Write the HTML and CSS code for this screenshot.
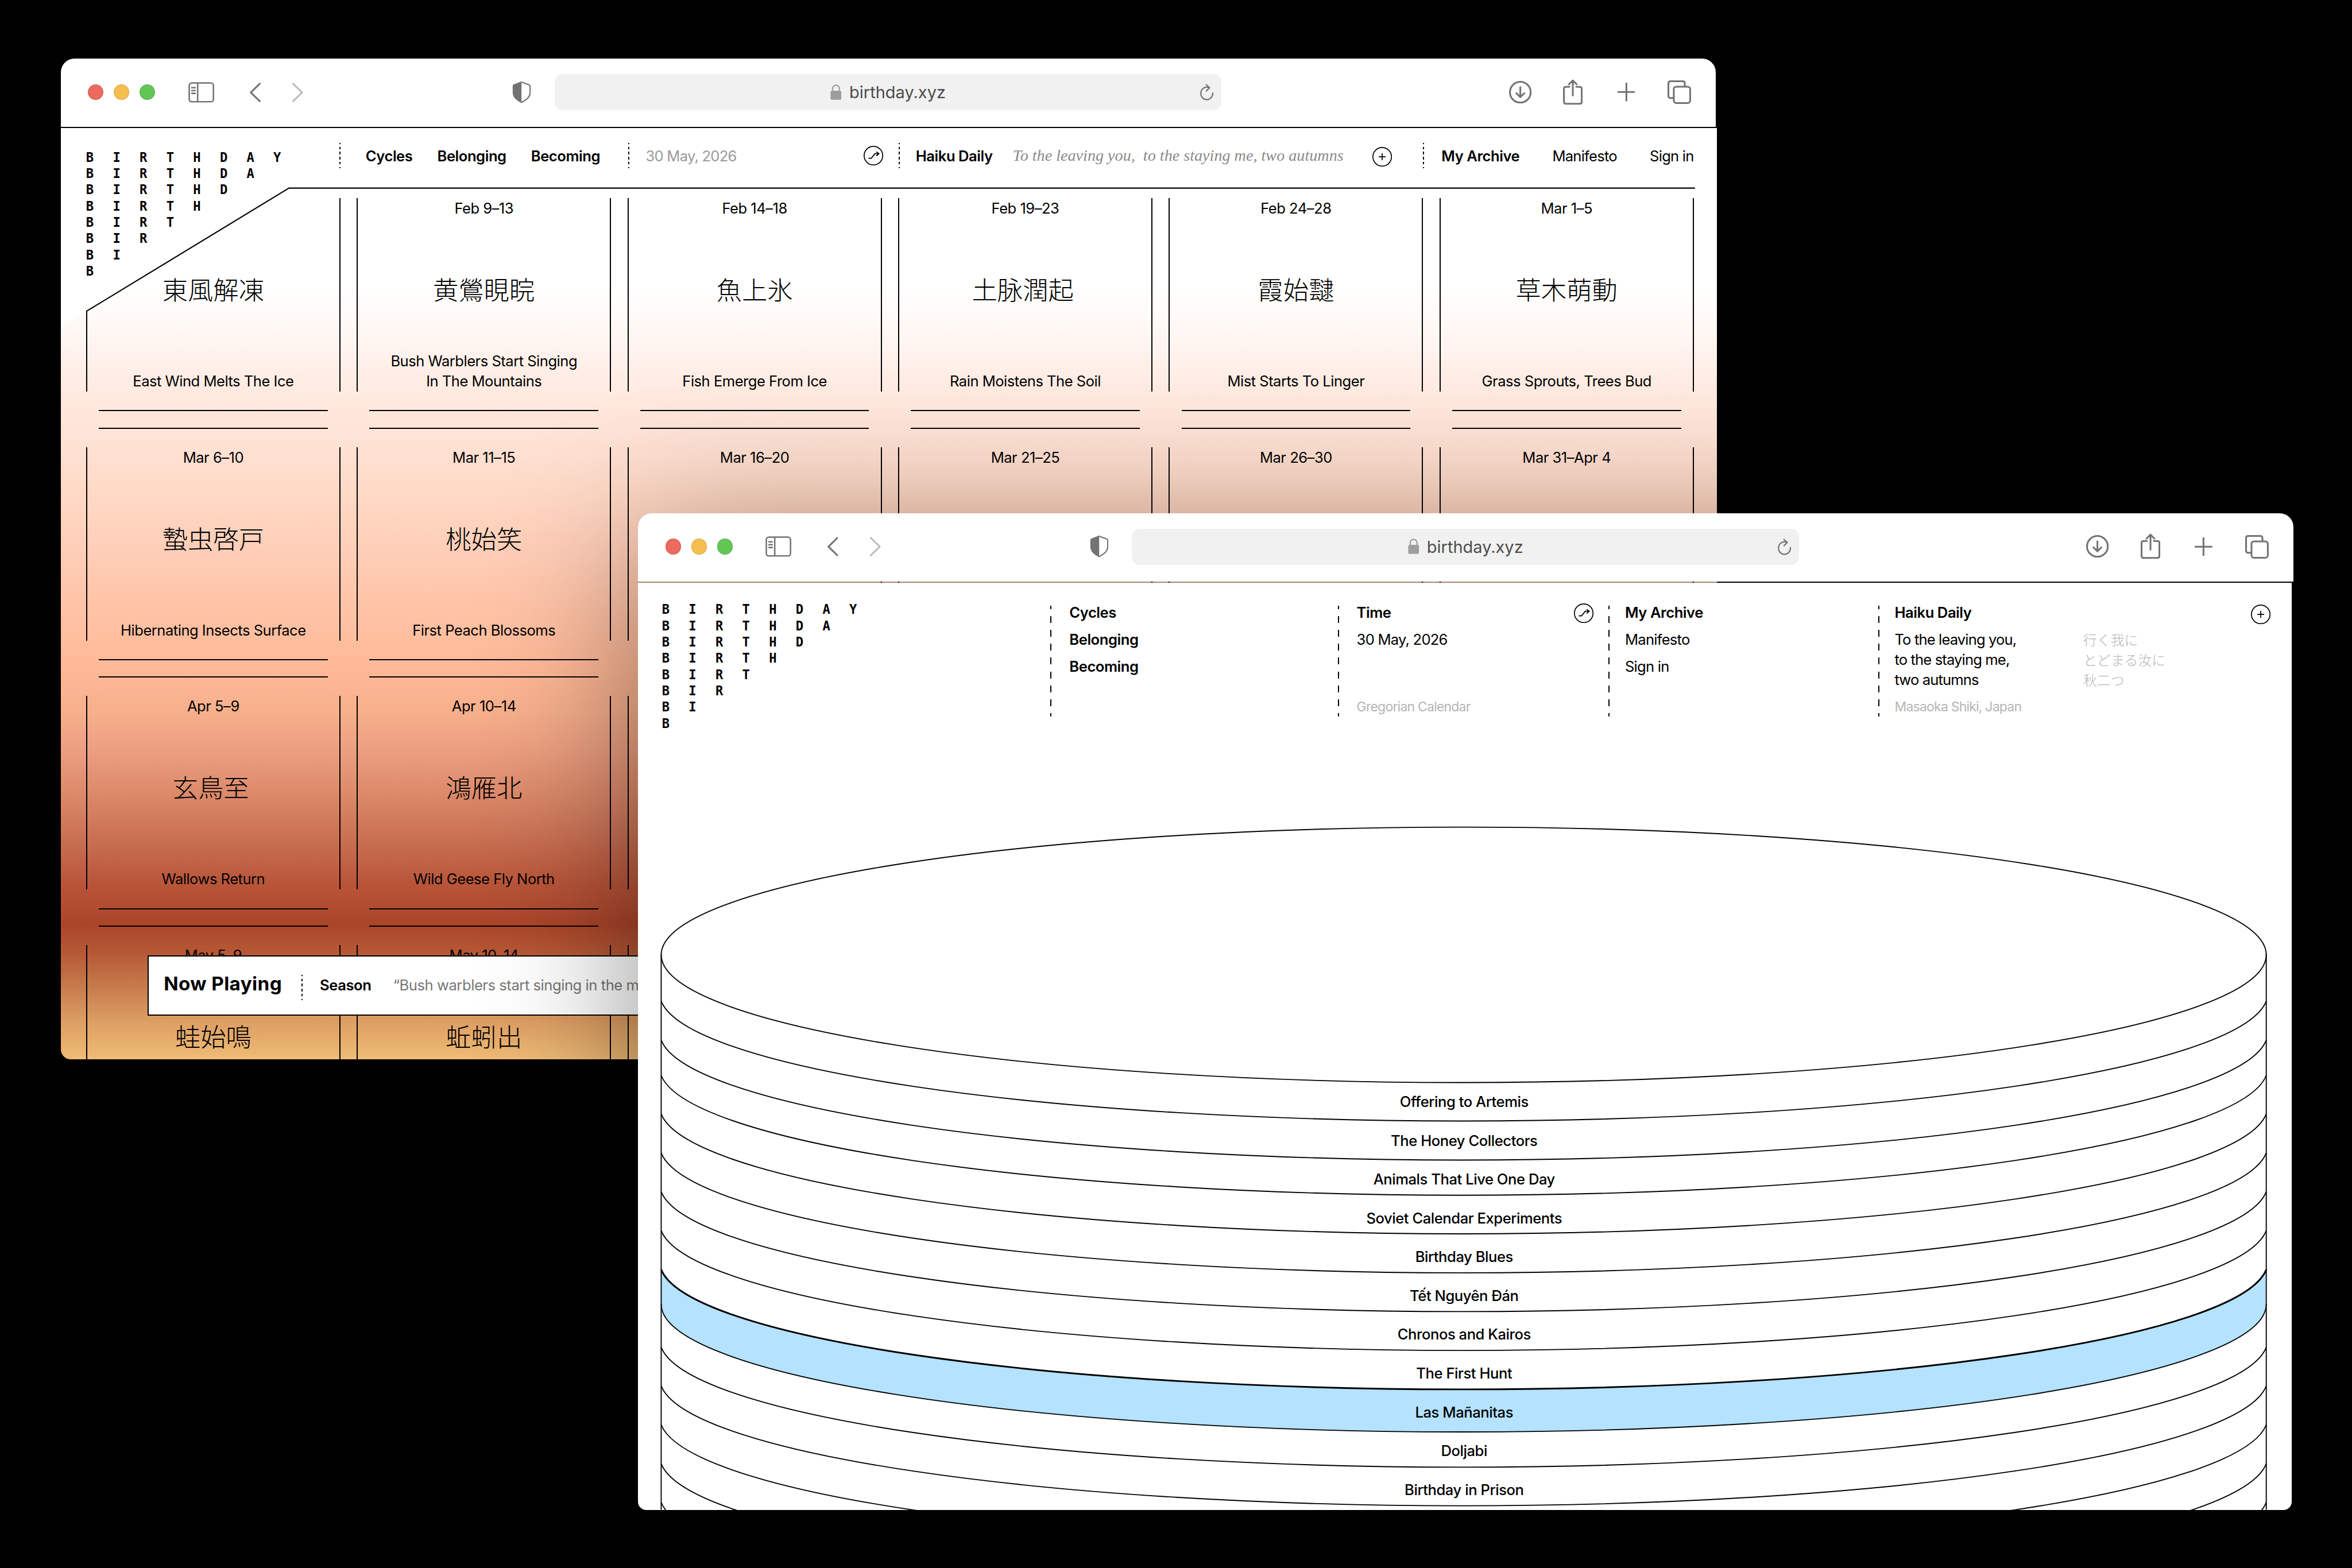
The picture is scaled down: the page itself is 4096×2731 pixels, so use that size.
FILE: index.html
```
<!DOCTYPE html>
<html lang="en">
<head>
    <meta charset="UTF-8">
    <title>Birthday</title>
    <link rel="stylesheet" href="styles.css">
</head>
<body>
<!-- shared icons -->
<svg class="sprite">
    <symbol id="i-sidebar" viewBox="0 0 53 42">
        <rect x="1.8" y="1.8" width="49.4" height="38.4" rx="5"/>
        <path d="M19 2v38M7 11.5h7M7 17.3h7M7 23h7"/>
    </symbol>
    <symbol id="i-back" viewBox="0 0 22 40"><path d="M20.5 2L2 20l18.500 18"/></symbol>
    <symbol id="i-forward" viewBox="0 0 22 40"><path d="M1.500 2L20 20L1.500 38"/></symbol>
    <symbol id="i-shield" viewBox="0 0 38 46">
        <path class="solid" d="M19 1L3 7Q1 8 1 10V24C1 34 9 40 19 45z"/>
        <path d="M19 2.300L34.500 8Q36.500 9 36.500 11V24C36.500 33 29 39 19 43.700"/>
    </symbol>
    <symbol id="i-lock" viewBox="0 0 23 32">
        <rect class="solid" x="0.500" y="13" width="22" height="18.500" rx="3"/>
        <path d="M4.500 14V9a7 7.500 0 0 1 14 0v5"/>
    </symbol>
    <symbol id="i-reload" viewBox="0 0 28 34">
        <path d="M25.800 18.500A12.200 12.800 0 1 1 17 7.200"/>
        <path d="M12.500 1.800L19.500 8L12.800 14.500"/>
    </symbol>
    <symbol id="i-download" viewBox="0 0 46 46">
        <circle cx="23" cy="23" r="21.200"/>
        <path d="M23 12.500v20M15 25l8 8l8-8"/>
    </symbol>
    <symbol id="i-share" viewBox="0 0 40 54">
        <path d="M13 15.500H6Q1.800 15.500 1.800 19.700V46Q1.800 50 6 50H34Q38.200 50 38.200 46V19.700Q38.200 15.500 34 15.500H27"/>
        <path d="M20 33V3M12 10.500L20 2.500L28 10.500"/>
    </symbol>
    <symbol id="i-plus" viewBox="0 0 36 38"><path d="M18 1v36M0.500 19h35"/></symbol>
    <symbol id="i-tabs" viewBox="0 0 48 48">
        <rect x="12.800" y="12.800" width="33.400" height="33.400" rx="5"/>
        <path d="M12.500 36H6Q1.800 36 1.800 32V6Q1.800 1.800 6 1.800H31Q35.200 1.800 35.200 6V12.500"/>
    </symbol>
    <symbol id="i-shuffle" viewBox="0 0 40 40">
        <circle cx="20" cy="20" r="19"/>
        <path d="M9.700 25.300h6L23 16h8.300M26 12.300l5.300 3.700l-5.300 4.500"/>
    </symbol>
    <symbol id="i-add" viewBox="0 0 40 40">
        <circle cx="20" cy="20" r="19"/>
        <path d="M20 13v14M13 20h14"/>
    </symbol>
</svg>

<div class="desktop">

    <div class="window window-calendar">
        <div class="toolbar">
            <div class="lights"><i class="red"></i><i class="yellow"></i><i class="green"></i></div>
            <svg class="icon sidebar"><use href="#i-sidebar"/></svg>
            <svg class="icon back"><use href="#i-back"/></svg>
            <svg class="icon forward"><use href="#i-forward"/></svg>
            <svg class="icon shield"><use href="#i-shield"/></svg>
            <div class="url">
                <svg class="icon lock"><use href="#i-lock"/></svg>
                <span>birthday.xyz</span>
                <svg class="icon reload"><use href="#i-reload"/></svg>
            </div>
            <svg class="icon download"><use href="#i-download"/></svg>
            <svg class="icon share"><use href="#i-share"/></svg>
            <svg class="icon plus"><use href="#i-plus"/></svg>
            <svg class="icon tabs"><use href="#i-tabs"/></svg>
        </div>

        <div class="page calendar">
            <!-- white corner behind the logo and the rule under the nav -->
            <svg class="frame" viewBox="0 0 3380 1901">
                <path class="corner" d="M0 0H600V122H465L0 406z"/>
                <path class="line" d="M52.700 538V373.700L465.500 122.600H3335"/>
            </svg>

            <div class="header">
                <div class="logo">
                    <i>BIRTHDAY</i>
                    <i>BIRTHDA</i>
                    <i>BIRTHD</i>
                    <i>BIRTH</i>
                    <i>BIRT</i>
                    <i>BIR</i>
                    <i>BI</i>
                    <i>B</i>
                </div>
                <div class="nav nav-cycles"><b>Cycles</b><b>Belonging</b><b>Becoming</b></div>
                <div class="nav nav-time">
                    <span>30 May, 2026</span>
                    <svg class="round"><use href="#i-shuffle"/></svg>
                </div>
                <div class="nav nav-haiku">
                    <b>Haiku Daily</b>
                    <em>To the leaving you, &nbsp;to the staying me, two autumns</em>
                    <svg class="round"><use href="#i-add"/></svg>
                </div>
                <div class="nav nav-account"><b>My Archive</b><span>Manifesto</span><span>Sign in</span></div>
            </div>

            <div class="seasons">
                <div class="season first">
                    <div class="body"><h3></h3><h2>東風解凍</h2><p>East Wind Melts The Ice</p></div>
                </div>
                <div class="season">
                    <div class="body"><h3>Feb 9–13</h3><h2>黄鶯睍睆</h2><p>Bush Warblers Start Singing<br>In The Mountains</p></div>
                </div>
                <div class="season">
                    <div class="body"><h3>Feb 14–18</h3><h2>魚上氷</h2><p>Fish Emerge From Ice</p></div>
                </div>
                <div class="season">
                    <div class="body"><h3>Feb 19–23</h3><h2 class="nudge">土脉潤起</h2><p>Rain Moistens The Soil</p></div>
                </div>
                <div class="season">
                    <div class="body"><h3>Feb 24–28</h3><h2>霞始靆</h2><p>Mist Starts To Linger</p></div>
                </div>
                <div class="season">
                    <div class="body"><h3>Mar 1–5</h3><h2>草木萌動</h2><p>Grass Sprouts, Trees Bud</p></div>
                </div>

                <div class="season">
                    <div class="body"><h3>Mar 6–10</h3><h2>蟄虫啓戸</h2><p>Hibernating Insects Surface</p></div>
                </div>
                <div class="season">
                    <div class="body"><h3>Mar 11–15</h3><h2>桃始笑</h2><p>First Peach Blossoms</p></div>
                </div>
                <div class="season"><div class="body"><h3>Mar 16–20</h3></div></div>
                <div class="season"><div class="body"><h3>Mar 21–25</h3></div></div>
                <div class="season"><div class="body"><h3>Mar 26–30</h3></div></div>
                <div class="season"><div class="body"><h3>Mar 31–Apr 4</h3></div></div>

                <div class="season">
                    <div class="body"><h3>Apr 5–9</h3><h2 class="nudge">玄鳥至</h2><p>Wallows Return</p></div>
                </div>
                <div class="season">
                    <div class="body"><h3>Apr 10–14</h3><h2>鴻雁北</h2><p>Wild Geese Fly North</p></div>
                </div>
                <div class="season"><div class="body"></div></div>

                <div class="season row-start">
                    <div class="body"><h3>May 5–9</h3><h2>蛙始鳴</h2></div>
                </div>
                <div class="season">
                    <div class="body"><h3>May 10–14</h3><h2>蚯蚓出</h2></div>
                </div>
                <div class="season"><div class="body"></div></div>
            </div>

            <div class="player">
                <strong>Now Playing</strong>
                <i class="dots"></i>
                <b>Season</b>
                <span>“Bush warblers start singing in the mountains”</span>
            </div>
        </div>
    </div>

    <div class="window window-stack">
        <div class="toolbar">
            <div class="lights"><i class="red"></i><i class="yellow"></i><i class="green"></i></div>
            <svg class="icon sidebar"><use href="#i-sidebar"/></svg>
            <svg class="icon back"><use href="#i-back"/></svg>
            <svg class="icon forward"><use href="#i-forward"/></svg>
            <svg class="icon shield"><use href="#i-shield"/></svg>
            <div class="url">
                <svg class="icon lock"><use href="#i-lock"/></svg>
                <span>birthday.xyz</span>
                <svg class="icon reload"><use href="#i-reload"/></svg>
            </div>
            <svg class="icon download"><use href="#i-download"/></svg>
            <svg class="icon share"><use href="#i-share"/></svg>
            <svg class="icon plus"><use href="#i-plus"/></svg>
            <svg class="icon tabs"><use href="#i-tabs"/></svg>
        </div>

        <div class="page stack">
            <div class="menu">
                <div class="logo">
                    <i>BIRTHDAY</i>
                    <i>BIRTHDA</i>
                    <i>BIRTHD</i>
                    <i>BIRTH</i>
                    <i>BIRT</i>
                    <i>BIR</i>
                    <i>BI</i>
                    <i>B</i>
                </div>
                <div class="col"><b>Cycles</b><b>Belonging</b><b>Becoming</b></div>
                <div class="col col-time">
                    <div class="col-title"><b>Time</b><svg class="round"><use href="#i-shuffle"/></svg></div>
                    <span>30 May, 2026</span>
                    <small>Gregorian Calendar</small>
                </div>
                <div class="col narrow"><b>My Archive</b><span>Manifesto</span><span>Sign in</span></div>
                <div class="col narrow col-haiku">
                    <div class="col-title"><b>Haiku Daily</b><svg class="round"><use href="#i-add"/></svg></div>
                    <div class="poem">
                        <p>To the leaving you,<br>to the staying me,<br>two autumns</p>
                        <p class="jp" lang="ja">行く我に<br>とどまる汝に<br>秋二つ</p>
                    </div>
                    <small>Masaoka Shiki, Japan</small>
                </div>
            </div>

            <div class="cake">
                <svg class="rings" viewBox="1302.400 1464 3374.200 1619">
                    <defs>
                        <path id="rim" d="M1349.800 0A1637.850 260.800 0 0 0 4625.500 0"/>
                        <path id="ring" d="M1349.800 16A1641 260.800 0 0 0 4625.500 16"/>
                    </defs>
                    <path class="active" d="M1349.800 2592.700A1641 260.800 0 0 0 4625.500 2592.700V2663.500A1637.850 260.800 0 0 1 1349.800 2663.500z"/>
                    <path d="M1349.800 1950.400A1637.850 260.800 0 0 1 4625.500 1950.400"/>
                    <path d="M1349.800 1949V3083M4625.500 1949V3083"/>
                    <use href="#rim" y="1950.400"/>
                    <use href="#ring" y="2028.900"/>
                    <use href="#ring" y="2108.600"/>
                    <use href="#ring" y="2180.400"/>
                    <use href="#ring" y="2259.200"/>
                    <use href="#ring" y="2338.800"/>
                    <use href="#ring" y="2417.900"/>
                    <use href="#ring" y="2497.200"/>
                    <use href="#ring" y="2576.700" class="thick"/>
                    <use href="#rim" y="2663.500"/>
                    <use href="#ring" y="2735.500"/>
                    <use href="#ring" y="2814.200"/>
                    <use href="#ring" y="2893.500"/>
                    <use href="#ring" y="2973"/>
                    <use href="#ring" y="3052"/>
                </svg>
                <ul class="layers">
                    <li>Offering to Artemis</li>
                    <li>The Honey Collectors</li>
                    <li>Animals That Live One Day</li>
                    <li>Soviet Calendar Experiments</li>
                    <li>Birthday Blues</li>
                    <li>Tết Nguyên Đán</li>
                    <li>Chronos and Kairos</li>
                    <li>The First Hunt</li>
                    <li>Las Mañanitas</li>
                    <li>Doljabi</li>
                    <li>Birthday in Prison</li>
                </ul>
            </div>
        </div>
    </div>

</div>
</body>
</html>
```
FILE: styles.css
```
* {
    margin: 0;
    padding: 0;
    box-sizing: border-box;
}

/* the artboard is 48rem x 32rem */
html {
    font-size: calc(100vw / 48);
}

body {
    background: #000;
    color: #000;
    overflow: hidden;
    font-family: Inter, "Liberation Sans", sans-serif;
}

ul {
    list-style: none;
}

h2, h3, p, span, em, b, small {
    font-size: .3rem;
    font-weight: 400;
    white-space: nowrap;
}

b {
    font-weight: 600;
    letter-spacing: -.018em;
}

span {
    letter-spacing: -.03em;
}

.sprite {
    display: none;
}

.desktop {
    position: relative;
    width: 48rem;
    height: 32rem;
    overflow: hidden;
}

/* windows */
.window {
    position: absolute;
    width: 33.8rem;
}

.window-calendar {
    left: 1.238rem;
    top: 1.2rem;
}

/* the tint only shows in the slit under the toolbar */
.window-stack {
    left: 13.024rem;
    top: 10.475rem;
    background: rgba(0, 0, 0, .33);
    border-radius: .28rem;
    box-shadow: 0 .6rem 4rem rgba(0, 0, 0, .42);
}

.toolbar {
    display: flex;
    align-items: center;
    width: 33.78rem;
    height: 1.395rem;
    margin-bottom: .02rem;
    padding: 0 0 .03rem .555rem;
    background: #fff;
    border-radius: .28rem .28rem 0 0;
}

.page {
    position: relative;
    background: #fff;
    overflow: hidden;
}

/* toolbar */
.lights {
    display: flex;
    gap: .208rem;
}

.lights i {
    width: .32rem;
    height: .32rem;
    border-radius: 50%;
    border: .012rem solid rgba(0, 0, 0, .12);
}

.red {
    background: #ed6a5f;
}

.yellow {
    background: #f5bf4f;
}

.green {
    background: #62c655;
}

.icon {
    flex: none;
    display: block;
    fill: none;
    stroke: #737373;
    stroke-width: 3.6;
    stroke-linecap: round;
    stroke-linejoin: round;
}

.icon.sidebar {
    width: .53rem;
    height: .42rem;
    margin-left: .671rem;
    stroke-width: 3;
}

.icon.back {
    width: .22rem;
    height: .4rem;
    margin-left: .728rem;
}

.icon.forward {
    width: .22rem;
    height: .4rem;
    margin-left: .65rem;
    stroke: #bdbdbd;
}

.icon.shield {
    width: .38rem;
    height: .46rem;
    margin-left: 4.27rem;
    stroke-width: 2.6;
}

.solid {
    fill: #737373;
    stroke: none;
}

.url {
    display: flex;
    align-items: center;
    justify-content: center;
    position: relative;
    width: 13.615rem;
    height: .74rem;
    margin-left: .48rem;
    background: #f1f1f1;
    border-radius: .16rem;
}

.url span {
    font-size: .34rem;
    color: #4c4c4c;
    letter-spacing: 0;
}

.icon.lock {
    width: .23rem;
    height: .32rem;
    margin-right: .155rem;
    stroke: #9e9e9e;
    stroke-width: 2.6;
}

#i-lock .solid {
    fill: #9e9e9e;
}

.icon.reload {
    position: absolute;
    right: .155rem;
    width: .28rem;
    height: .34rem;
    stroke-width: 2.6;
}

.icon.download {
    width: .46rem;
    height: .46rem;
    margin-left: 5.86rem;
}

.icon.share {
    width: .4rem;
    height: .54rem;
    margin-left: .65rem;
}

.icon.plus {
    width: .36rem;
    height: .38rem;
    margin-left: .705rem;
}

.icon.tabs {
    width: .48rem;
    height: .48rem;
    margin-left: .665rem;
}

.round {
    flex: none;
    width: .4rem;
    height: .4rem;
    fill: none;
    stroke: #000;
    stroke-width: 2;
}

.logo {
    height: 0;
    font: bold .26rem/.3318rem "DejaVu Sans Mono", monospace;
    letter-spacing: .3898rem;
}

.logo i {
    display: block;
    width: max-content;
    font-style: normal;
}

/* calendar window */
.calendar {
    height: 19.01rem;
    border-radius: 0 0 .2rem .2rem;
    background: linear-gradient(
        #fff 0,
        #fff 3.2rem,
        #fffaf7 3.9rem,
        #fff1eb 4.7rem,
        #ffeae0 5.4rem,
        #ffe2d5 6.4rem,
        #ffd9c5 7.5rem,
        #ffcfb9 8.5rem,
        #ffc4a8 9.7rem,
        #ffb997 11rem,
        #f7b08c 11.9rem,
        #ec9f80 12.7rem,
        #dd8c6c 13.5rem,
        #cb7356 14.4rem,
        #b9563a 15.4rem,
        #ab452a 16.25rem,
        #b65936 16.85rem,
        #c87f4f 17.6rem,
        #dfa165 18.3rem,
        #efbc76 19.01rem
    );
}

.frame {
    position: absolute;
    left: 0;
    top: 0;
    width: 33.8rem;
    height: 19.01rem;
}

.corner {
    fill: #fff;
}

.line {
    fill: none;
    stroke: #000;
    stroke-width: 2.4;
}

.header {
    position: relative;
    display: grid;
    grid-template-columns: 5.69rem 5.89rem 5.52rem 10.7rem 1fr;
    height: 1.426rem;
}

.header .logo {
    padding: .43rem 0 0 .518rem;
}

.nav, .dots {
    background: repeating-linear-gradient(#000 0 .026rem, transparent .026rem .077rem, #000 .077rem .103rem) no-repeat 0 .305rem / .024rem .515rem;
}

.nav {
    display: flex;
    align-items: center;
    height: 1.13rem;
}

.nav-cycles {
    padding-left: .535rem;
    gap: .505rem;
}

.nav-time {
    justify-content: space-between;
    padding: 0 .31rem 0 .36rem;
}

.nav-time span {
    color: #999;
}

.nav-haiku {
    justify-content: space-between;
    padding: 0 .63rem 0 .35rem;
}

.nav-haiku em {
    color: #8a8a8a;
    font: italic .33rem "Liberation Serif", serif;
    margin-left: -.18rem;
}

.nav-haiku .round {
    margin-top: .04rem;
}

.nav-account {
    gap: .67rem;
    padding-left: .38rem;
}

.seasons {
    display: grid;
    grid-template-columns: repeat(6, 5.19rem);
    grid-auto-rows: 5.083rem;
    column-gap: .334rem;
    padding-left: .519rem;
}

.row-start {
    grid-column: 1;
}

.body {
    display: flex;
    flex-direction: column;
    align-items: center;
    height: 3.95rem;
    border: solid #000;
    border-width: 0 .024rem;
    text-align: center;
}

/* the corner line takes over the left edge */
.first .body {
    border-left-color: transparent;
}

.season::after {
    content: "";
    display: block;
    height: .333rem;
    margin: .38rem .26rem 0;
    border: solid #000;
    border-width: .024rem 0;
}

.season h3, .season p {
    line-height: .41rem;
    letter-spacing: -.02em;
}

.season h3 {
    height: .43rem;
    line-height: .43rem;
}

.season h2 {
    margin-top: 1.13rem;
    font: 300 .52rem/.6rem "Noto Sans CJK JP", sans-serif;
}

.season .nudge {
    margin-right: .1rem;
}

.season p {
    margin-top: auto;
}

.player {
    position: absolute;
    left: 1.77rem;
    top: 16.89rem;
    display: flex;
    align-items: baseline;
    width: 24rem;
    height: 1.23rem;
    padding: .31rem 0 0 .31rem;
    background: #fff;
    border: .025rem solid #000;
}

.player strong {
    font-size: .39rem;
    letter-spacing: .012em;
}

.player .dots {
    align-self: flex-start;
    width: .024rem;
    height: .515rem;
    margin: .06rem .35rem 0 .4rem;
    background-position: 0 0;
}

.player b {
    margin-right: .45rem;
}

.player span {
    color: #777;
    letter-spacing: -.018em;
}

/* stack window */
.stack {
    width: 33.742rem;
    height: 18.93rem;
    border-radius: 0 0 .17rem .17rem;
}

.menu {
    display: grid;
    grid-template-columns: 8.415rem 5.863rem 5.527rem 5.502rem 1fr;
    padding-top: .35rem;
}

.menu .logo {
    padding: .035rem 0 0 .485rem;
}

.col {
    display: flex;
    flex-direction: column;
    height: 2.39rem;
    padding-left: .385rem;
    background: repeating-linear-gradient(#000 0 .07rem, transparent .07rem .212rem, #000 .212rem .2825rem) no-repeat 0 .12rem / .024rem 2.26rem;
}

.col.narrow {
    padding-left: .335rem;
}

.col b, .col span {
    line-height: .55rem;
}

.col small {
    margin-top: auto;
    font-size: .27rem;
    line-height: .4rem;
    letter-spacing: -.035em;
    color: #b5b5b5;
}

.col-title {
    display: flex;
    align-items: center;
    justify-content: space-between;
    height: .55rem;
}

.col-time {
    padding-right: .305rem;
}

.col-haiku {
    padding-right: .43rem;
}

.col-haiku .round {
    margin-top: .04rem;
}

.poem {
    display: grid;
    grid-template-columns: 3.85rem 1fr;
    margin-top: .07rem;
}

.poem p {
    line-height: .408rem;
    letter-spacing: -.034em;
}

.poem .jp {
    color: #b5b5b5;
    font: 300 .28rem/.408rem "Noto Sans CJK JP", sans-serif;
    letter-spacing: 0;
}

.cake {
    display: grid;
    height: 16.19rem;
}

.rings, .layers {
    grid-area: 1 / 1;
}

.rings {
    width: 33.742rem;
    height: 16.19rem;
    fill: none;
    stroke: #000;
    stroke-width: 2.2;
}

.active {
    fill: #b4e2ff;
    stroke: none;
}

.thick {
    stroke-width: 3.4;
}

.layers {
    padding: 7.46rem .03rem 0 0;
    text-align: center;
    position: relative;
}

.layers li {
    font-size: .3rem;
    font-weight: 450;
    line-height: .792rem;
    letter-spacing: -.018em;
}
```
